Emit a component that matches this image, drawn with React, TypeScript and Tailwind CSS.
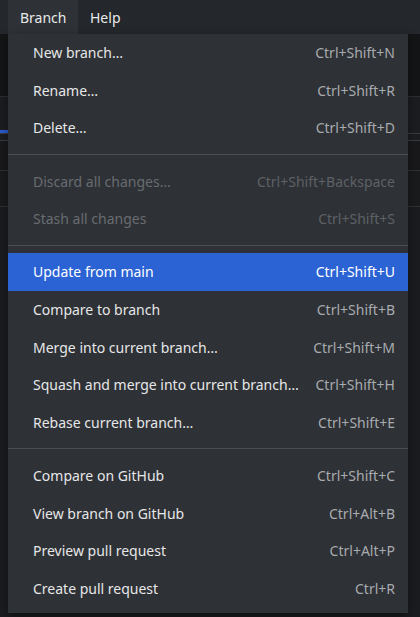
const groups = [
  [
    { label: 'New branch…', keys: 'Ctrl+Shift+N' },
    { label: 'Rename…', keys: 'Ctrl+Shift+R' },
    { label: 'Delete…', keys: 'Ctrl+Shift+D' },
  ],
  [
    { label: 'Discard all changes…', keys: 'Ctrl+Shift+Backspace', disabled: true },
    { label: 'Stash all changes', keys: 'Ctrl+Shift+S', disabled: true },
  ],
  [
    { label: 'Update from main', keys: 'Ctrl+Shift+U', active: true },
    { label: 'Compare to branch', keys: 'Ctrl+Shift+B' },
    { label: 'Merge into current branch…', keys: 'Ctrl+Shift+M' },
    { label: 'Squash and merge into current branch…', keys: 'Ctrl+Shift+H' },
    { label: 'Rebase current branch…', keys: 'Ctrl+Shift+E' },
  ],
  [
    { label: 'Compare on GitHub', keys: 'Ctrl+Shift+C' },
    { label: 'View branch on GitHub', keys: 'Ctrl+Alt+B' },
    { label: 'Preview pull request', keys: 'Ctrl+Alt+P' },
    { label: 'Create pull request', keys: 'Ctrl+R' },
  ],
]

type Item = { label: string; keys: string; disabled?: boolean; active?: boolean }

function Row({ item }: { item: Item }) {
  let rowCls = 'flex items-center justify-between h-[37.6px] pl-[25px] pr-[13px]'
  let labelCls = 'text-[#e6e7e8]'
  let keysCls = 'text-[#a8abaf]'
  if (item.active) {
    rowCls += ' bg-[#2b63d4]'
    labelCls = 'text-white'
    keysCls = 'text-white'
  } else if (item.disabled) {
    labelCls = 'text-[#686c71]'
    keysCls = 'text-[#5d6166]'
  }
  return (
    <div className={rowCls}>
      <span className={labelCls}>{item.label}</span>
      <span className={keysCls}>{item.keys}</span>
    </div>
  )
}

export default function App() {
  return (
    <div
      className="relative w-[420px] h-[617px] overflow-hidden bg-[#1b1c1f] text-[14px]"
      style={{ fontFamily: '"Noto Sans", "Open Sans", sans-serif' }}
    >
      {/* menubar */}
      <div className="flex h-[34px] bg-[#24272b] pl-[8px]">
        <div className="flex items-center w-[70px] pl-[12px] bg-[#2e3135] text-[#e8e9ea]">Branch</div>
        <div className="flex items-center pl-[12px] text-[#e8e9ea]">Help</div>
      </div>

      {/* app content behind the menu */}
      <div className="flex flex-col">
        <div className="h-[63px] bg-[#141517] border-b border-[#2c2e32]" />
        <div className="h-[33px] bg-[#1c1d20]" />
        <div className="flex h-[3px]">
          <div className="w-[8px] bg-[#2a5bd0]" />
          <div className="flex-1 bg-[#1c1d20]" />
        </div>
        <div className="h-[8px] bg-[#1c1d20] border-t border-b border-[#3a3c40]" />
        <div className="h-[30px] bg-[#19191c] border-b border-[#303236]" />
        <div className="h-[36px] bg-[#1a1b1d] border-b border-[#303236]" />
      </div>

      {/* dropdown */}
      <div className="absolute top-[34px] left-[8px] w-[400px] bg-[#2e3135] pb-[6px] shadow-[0_4px_10px_rgba(0,0,0,0.4)]">
        {groups.map((group, gi) => (
          <div key={gi}>
            {gi > 0 && (
              <div className="flex items-center h-[15.6px]">
                <div className="h-px w-full bg-[#4a4d52]" />
              </div>
            )}
            {group.map((item) => (
              <Row key={item.label} item={item} />
            ))}
          </div>
        ))}
      </div>
    </div>
  )
}
